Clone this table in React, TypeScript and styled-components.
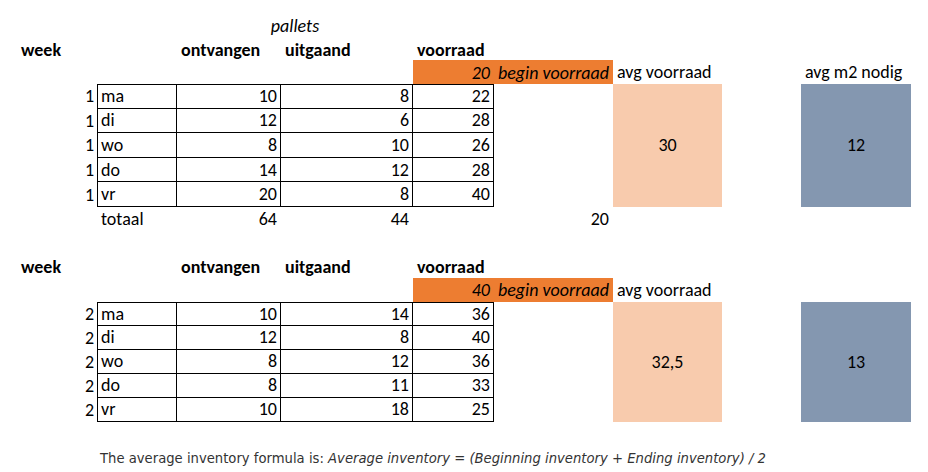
import React from "react";
import styled, { createGlobalStyle, css } from "styled-components";

const Global = createGlobalStyle`
  html, body { margin: 0; padding: 0; background: #fff; }
  body { font-family: Calibri, Carlito, Lato, "Liberation Sans", sans-serif; font-size: 18px; color: #000; }
`;

const COLS = "80px 80px 104px 132px 81px 119px 109px 79px 110px";

const Page = styled.main`
  width: 928px;
  height: 472px;
  padding: 12px 0 0 17px;
  box-sizing: border-box;
  overflow: hidden;
`;

const Block = styled.section<{ $rows: string; $gap?: number }>`
  display: grid;
  grid-template-columns: ${COLS};
  grid-template-rows: ${(p) => p.$rows};
  margin-top: ${(p) => p.$gap ?? 0}px;
`;

type Place = { $c: number; $r: number; $cs?: number; $rs?: number };

const place = css<Place>`
  grid-column: ${(p) => p.$c} / span ${(p) => p.$cs ?? 1};
  grid-row: ${(p) => p.$r} / span ${(p) => p.$rs ?? 1};
`;

const Text = styled.div<Place & { $align?: "left" | "right" | "center"; $bold?: boolean; $italic?: boolean }>`
  ${place};
  display: flex;
  align-items: center;
  justify-content: ${(p) => (p.$align === "right" ? "flex-end" : p.$align === "center" ? "center" : "flex-start")};
  padding: ${(p) => (p.$bold || p.$italic ? "3px" : "0")} 4px 0;
  white-space: nowrap;
  font-weight: ${(p) => (p.$bold ? 700 : 400)};
  font-style: ${(p) => (p.$italic ? "italic" : "normal")};
`;

const WeekNo = styled(Text)`
  padding-right: 3px;
`;

const TCell = styled.div<Place & { $align?: "left" | "right"; $top?: boolean; $left?: boolean }>`
  ${place};
  box-sizing: border-box;
  display: flex;
  align-items: center;
  justify-content: ${(p) => (p.$align === "right" ? "flex-end" : "flex-start")};
  padding: 0 3px;
  border-right: 1px solid #000;
  border-bottom: 1px solid #000;
  border-top: ${(p) => (p.$top ? "1px solid #000" : "none")};
  border-left: ${(p) => (p.$left ? "1px solid #000" : "none")};
  white-space: nowrap;
`;

const BeginBar = styled.div<Place>`
  ${place};
  display: grid;
  grid-template-columns: 81px 119px;
  background: #ed7d31;
  font-style: italic;
  align-items: center;
  white-space: nowrap;
  padding-top: 1px;
`;

const BeginValue = styled.span`
  text-align: right;
  padding-right: 4px;
`;

const BeginLabel = styled.span`
  padding-left: 4px;
`;

const AvgBox = styled.div<Place & { $tone: "peach" | "slate" }>`
  ${place};
  display: flex;
  align-items: center;
  justify-content: center;
  background: ${(p) => (p.$tone === "peach" ? "#f8cbad" : "#8497b0")};
`;

const Footer = styled.p`
  margin: 25px 0 0 83px;
  height: 24px;
  display: flex;
  align-items: center;
  font-family: Tahoma, "DejaVu Sans", Verdana, sans-serif;
  font-size: 13.2px;
  color: #333;
  white-space: pre;
  em { font-style: italic; }
`;

type Row = [string, number, number, number];

const week1: Row[] = [
  ["ma", 10, 8, 22],
  ["di", 12, 6, 28],
  ["wo", 8, 10, 26],
  ["do", 14, 12, 28],
  ["vr", 20, 8, 40],
];
const week2: Row[] = [
  ["ma", 10, 14, 36],
  ["di", 12, 8, 40],
  ["wo", 8, 12, 36],
  ["do", 8, 11, 33],
  ["vr", 10, 18, 25],
];

function DataRows({ rows, week, start }: { rows: Row[]; week: number; start: number }) {
  return (
    <>
      {rows.map((r, i) => {
        const row = start + i;
        const top = i === 0;
        return (
          <React.Fragment key={r[0]}>
            <WeekNo $c={1} $r={row} $align="right">
              {week}
            </WeekNo>
            <TCell $c={2} $r={row} $top={top} $left>
              {r[0]}
            </TCell>
            <TCell $c={3} $r={row} $top={top} $align="right">
              {r[1]}
            </TCell>
            <TCell $c={4} $r={row} $top={top} $align="right">
              {r[2]}
            </TCell>
            <TCell $c={5} $r={row} $top={top} $align="right">
              {r[3]}
            </TCell>
          </React.Fragment>
        );
      })}
    </>
  );
}

function Headers({ row }: { row: number }) {
  return (
    <>
      <Text $c={1} $r={row} $bold>week</Text>
      <Text $c={3} $r={row} $bold>ontvangen</Text>
      <Text $c={4} $r={row} $bold>uitgaand</Text>
      <Text $c={5} $r={row} $bold>voorraad</Text>
    </>
  );
}

export default function App() {
  return (
    <>
      <Global />
      <Page>
        <Block $rows="24px 24px 24px repeat(5, 24.6px) 24px">
          <Text $c={3} $r={1} $cs={2} $align="center" $italic>pallets</Text>
          <Headers row={2} />
          <BeginBar $c={5} $r={3} $cs={2}>
            <BeginValue>20</BeginValue>
            <BeginLabel>begin voorraad</BeginLabel>
          </BeginBar>
          <Text $c={7} $r={3}>avg voorraad</Text>
          <Text $c={9} $r={3}>avg m2 nodig</Text>
          <DataRows rows={week1} week={1} start={4} />
          <AvgBox $c={7} $r={4} $rs={5} $tone="peach">30</AvgBox>
          <AvgBox $c={9} $r={4} $rs={5} $tone="slate">12</AvgBox>
          <Text $c={2} $r={9}>totaal</Text>
          <Text $c={3} $r={9} $align="right">64</Text>
          <Text $c={4} $r={9} $align="right">44</Text>
          <Text $c={6} $r={9} $align="right">20</Text>
        </Block>
        <Block $rows="24px 24px repeat(5, 24px)" $gap={23}>
          <Headers row={1} />
          <BeginBar $c={5} $r={2} $cs={2}>
            <BeginValue>40</BeginValue>
            <BeginLabel>begin voorraad</BeginLabel>
          </BeginBar>
          <Text $c={7} $r={2}>avg voorraad</Text>
          <DataRows rows={week2} week={2} start={3} />
          <AvgBox $c={7} $r={3} $rs={5} $tone="peach">32,5</AvgBox>
          <AvgBox $c={9} $r={3} $rs={5} $tone="slate">13</AvgBox>
        </Block>
        <Footer>
          The average inventory formula is: <em>Average inventory = (Beginning inventory + Ending inventory) / 2</em>
        </Footer>
      </Page>
    </>
  );
}
